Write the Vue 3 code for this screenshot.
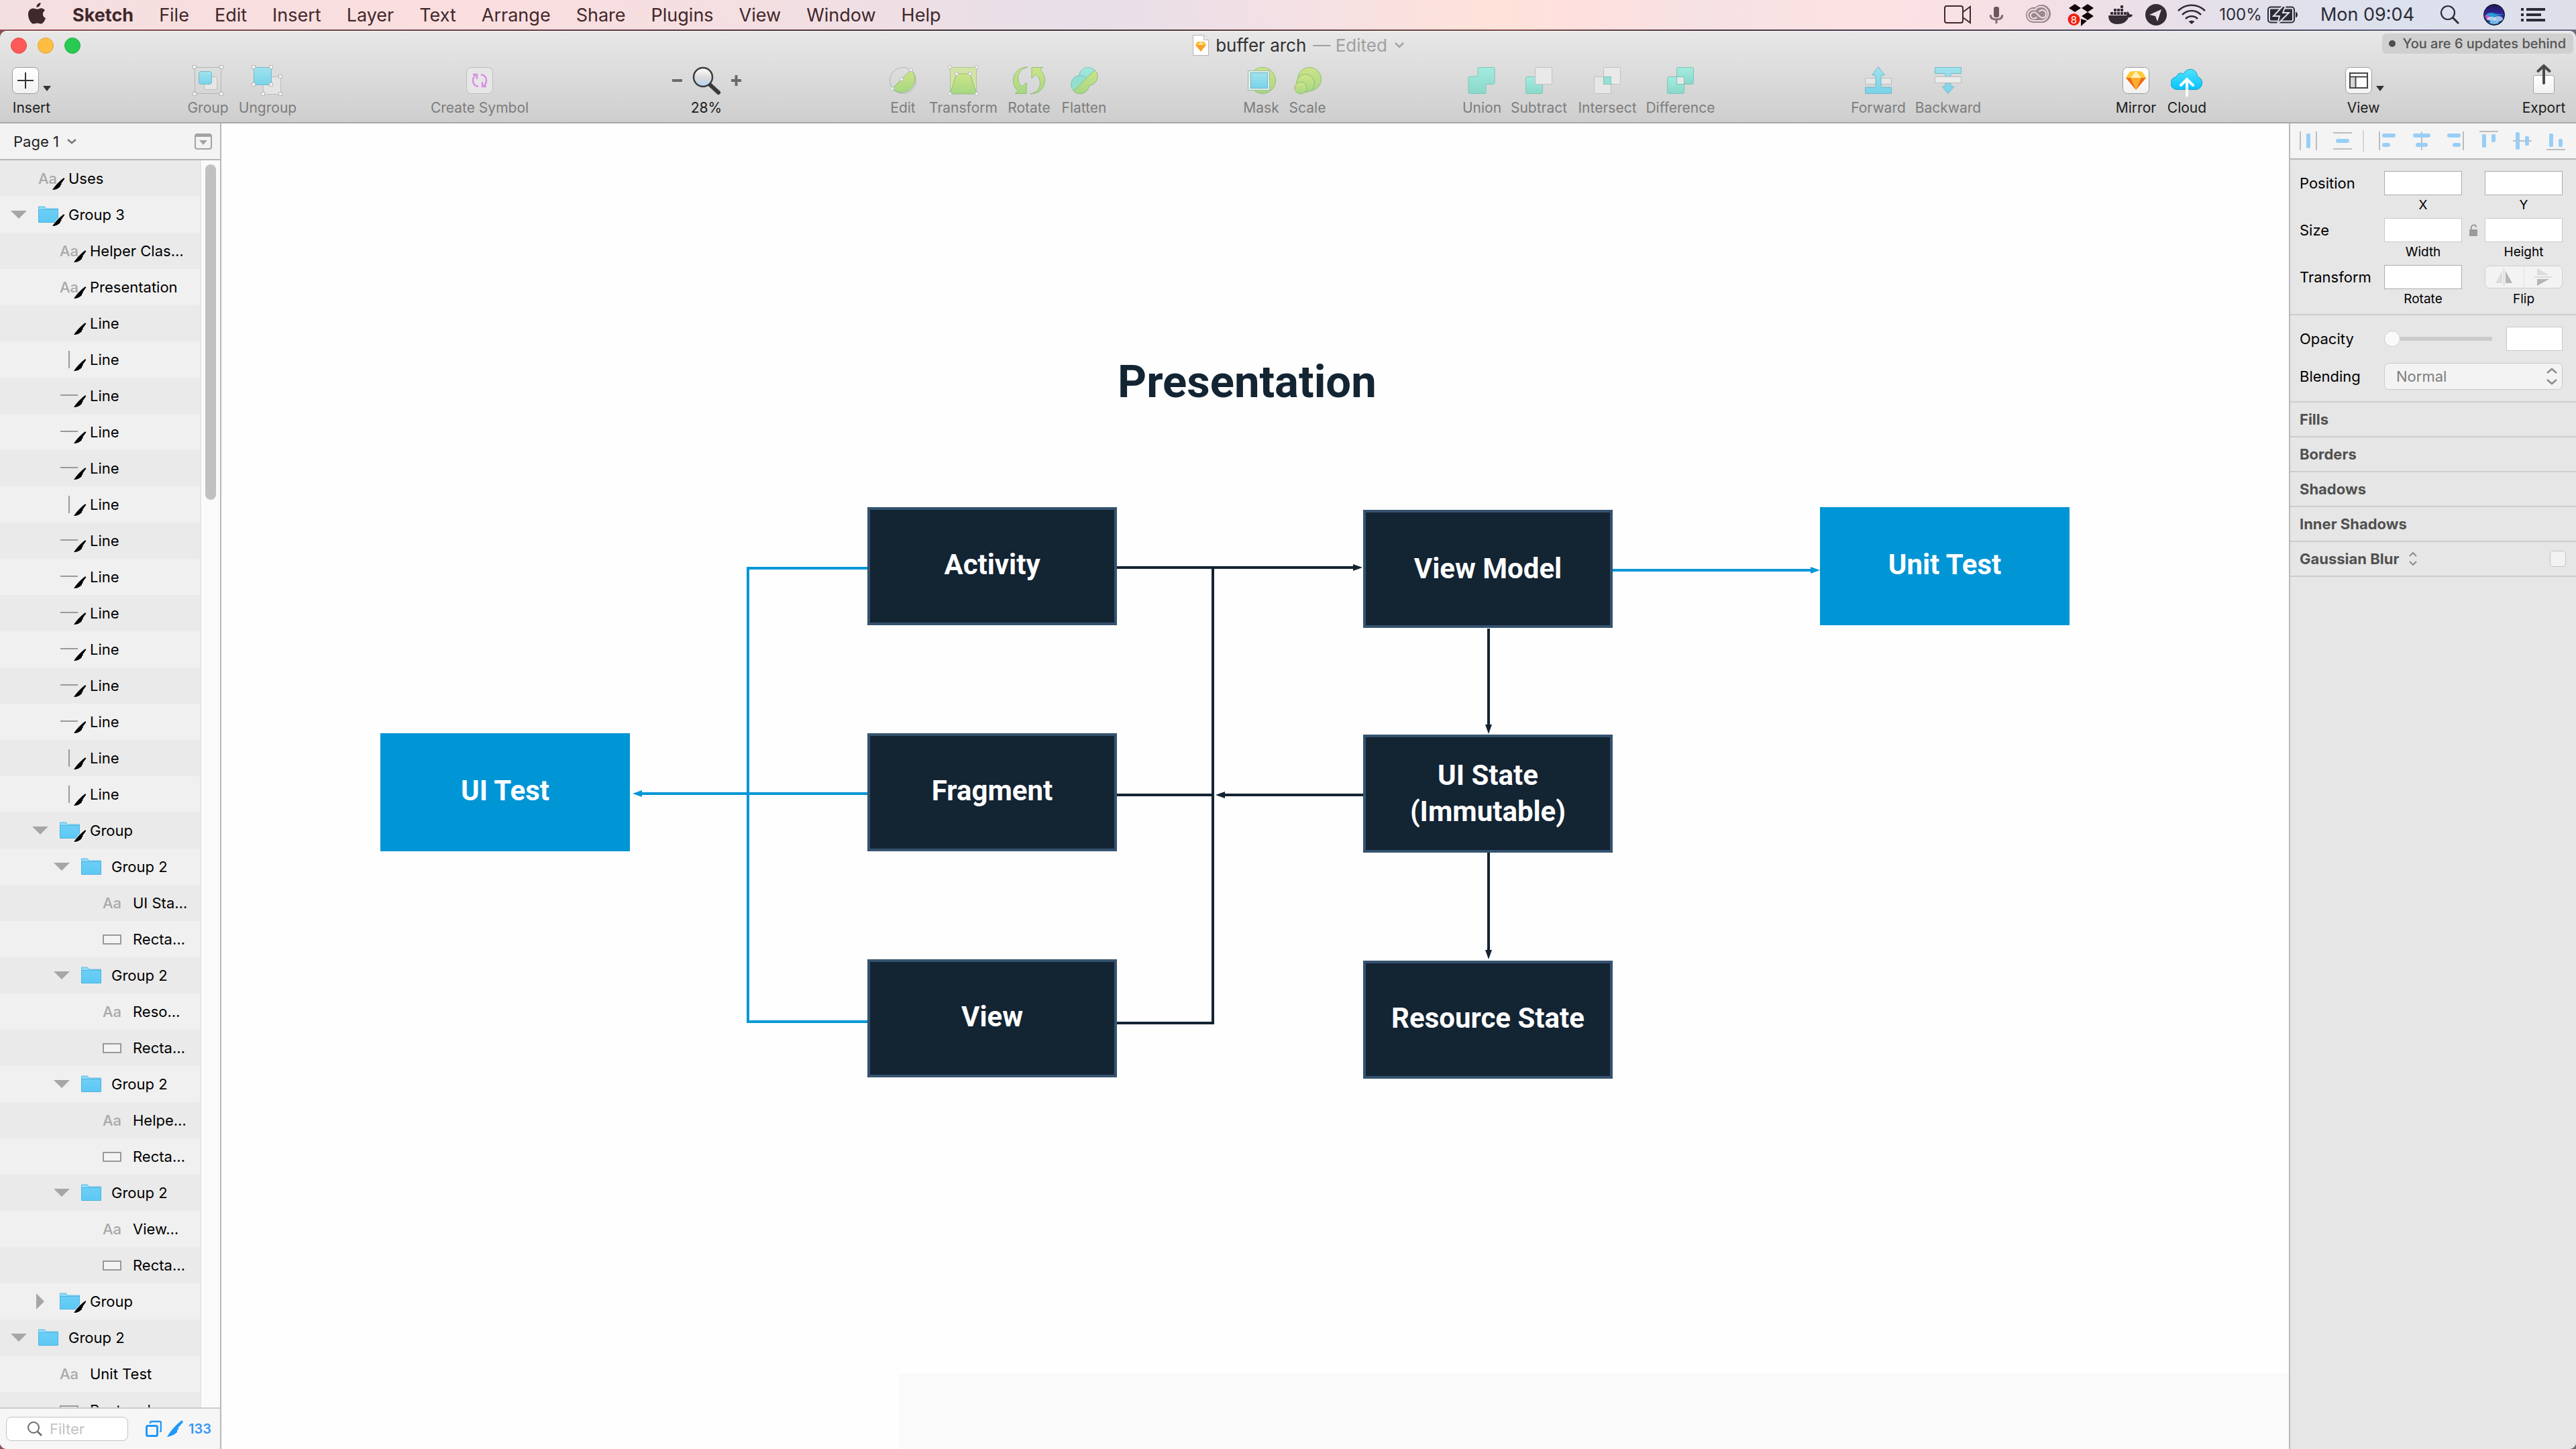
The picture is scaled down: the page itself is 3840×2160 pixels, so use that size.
<script setup>
const menus = ['File', 'Edit', 'Insert', 'Layer', 'Text', 'Arrange', 'Share', 'Plugins', 'View', 'Window', 'Help']

const box = '<rect x="4.5" y="4.5" width="39" height="39" rx="7" fill="url(#g-white)" stroke="#9c9c9c"/>'
const drop = '<path d="M50 32h12l-6 8z" fill="#333"/>'
const handle = (x, y) => `<rect x="${x - 2.5}" y="${y - 2.5}" width="5" height="5" fill="#f2f2f2" stroke="#b9b9b9"/>`
const knob = (x, y) => `<circle cx="${x}" cy="${y}" r="2.6" fill="#f0f0f0" stroke="#bbb"/>`
const arrowShape = 'M22 4C8 4 .5 14 .5 24c0 7 3 12 7 16l-4 3.500h16.500V27l-6 6C10 30 7.500 26 7.500 20 7.500 12 13 6 22 4z'

const glyphs = {
  insert: { w: 66, d: box + '<path d="M24 12v24M12 24h24" stroke="#333" stroke-width="2"/>' + drop },
  group: {
    w: 48,
    d: '<rect x="4.5" y="4.5" width="39" height="39" fill="none" stroke="#b4b4b4"/><rect x="18.5" y="18.5" width="19" height="19" rx="3" fill="#e6e6e6" stroke="#bdbdbd"/><rect x="10.5" y="10.5" width="19" height="19" rx="3" fill="url(#g-blue)" stroke="#78b8c8"/>' +
      handle(4, 4) + handle(44, 4) + handle(4, 44) + handle(44, 44)
  },
  ungroup: {
    w: 48,
    d: '<rect x="17.5" y="18.5" width="26" height="26" fill="#e4e4e4" stroke="#bdbdbd"/><rect x="3.500" y="4.5" width="26" height="26" fill="url(#g-blue)" stroke="#78b8c8"/>' +
      handle(3, 4) + handle(29, 4) + handle(3, 30) + handle(29, 30) + handle(43, 18) + handle(17, 44) + handle(43, 44)
  },
  symbol: {
    w: 48,
    d: '<rect x="4.5" y="4.5" width="39" height="39" rx="7" fill="#e6e6e6" stroke="#bdbdbd"/><g fill="none" stroke="#d890e6" stroke-width="2.5"><path d="M22 33c-6-1-8-5-8-9 0-4 2-7 5-9M14 15h6v7"/><path d="M26 15c6 1 8 5 8 9 0 4-2 7-5 9M34 33h-6v-7"/></g>'
  },
  zoom: {
    w: 106,
    d: '<path d="M2 24h15M90 24h15M97.500 16v16" stroke="#6a6a6a" stroke-width="4"/><path d="M58 30l13 12" stroke="#3a3a3a" stroke-width="6" stroke-linecap="round"/><circle cx="48" cy="19" r="14" fill="url(#g-lens)" stroke="#3c3c3c" stroke-width="2.500"/>'
  },
  edit: {
    w: 48,
    d: '<circle cx="24" cy="24" r="19.500" fill="none" stroke="#b4b4b4"/><path d="M36 8A19.500 19.500 0 1 1 8 36z" fill="url(#g-green)" stroke="#8dbd78"/>' + knob(8, 36) + knob(22, 22) + knob(36, 8)
  },
  transform: {
    w: 48,
    d: '<rect x="4.5" y="4.5" width="39" height="39" fill="#d3e3a8" stroke="#abc590"/><path d="M14 14h20l10 30H4z" fill="url(#g-green)" stroke="#8dbd78"/>' + knob(4, 4) + knob(44, 4) + knob(4, 44) + knob(44, 44) + knob(14, 14) + knob(34, 14)
  },
  rotate: {
    w: 48,
    d: `<path d="${arrowShape}" fill="url(#g-green)" stroke="#8dbd78"/><path d="${arrowShape}" transform="rotate(180 24 24)" fill="url(#g-green-up)" stroke="#8dbd78"/>`
  },
  flatten: {
    w: 48,
    d: '<circle cx="30" cy="18" r="13.500" fill="url(#g-teal)" stroke="#7fc4b4"/><circle cx="18" cy="30" r="13.500" fill="#93dfd0" stroke="#7fc4b4"/><path d="M40 8.500L8.500 39.500a13.500 13.500 0 0 0 23-8A13.500 13.500 0 0 0 40 8.500z" fill="url(#g-green)" stroke="#8dbd78"/>'
  },
  mask: {
    w: 48,
    d: '<circle cx="26" cy="24" r="19.500" fill="url(#g-green)" stroke="#8dbd78"/><rect x="4.500" y="9.500" width="32" height="29" fill="#dfeee0" stroke="#9fb8b0"/><rect x="8.500" y="12.500" width="25" height="23" fill="url(#g-blue)" stroke="#6fb3cc"/>'
  },
  scale: {
    w: 48,
    d: '<g fill="url(#g-green)" stroke="#8dbd78"><circle cx="27" cy="22" r="17.500"/><circle cx="21" cy="28" r="13.500"/><circle cx="14" cy="35" r="9"/></g>'
  },
  union: { w: 48, d: '<path d="M20 4.500h21a2 2 0 0 1 2 2v21a2 2 0 0 1-2 2H30v12a2 2 0 0 1-2 2H6a2 2 0 0 1-2-2V20a2 2 0 0 1 2-2h12V6.500a2 2 0 0 1 2-2z" fill="url(#g-teal)" stroke="#7fc4b4"/>' },
  subtract: { w: 48, d: '<rect x="4.5" y="18.5" width="25" height="25" rx="2" fill="url(#g-teal)" stroke="#7fc4b4"/><rect x="18.500" y="4.500" width="25" height="25" rx="2" fill="#e9e9e9" stroke="#c0c0c0"/>' },
  intersect: { w: 48, d: '<rect x="4.5" y="18.5" width="25" height="25" rx="2" fill="#e6e6e6" stroke="#c0c0c0"/><rect x="18.500" y="4.500" width="25" height="25" rx="2" fill="#e9e9e9" stroke="#c0c0c0"/><rect x="18.500" y="18.500" width="11" height="11" fill="#97dfd2" stroke="#7fc4b4"/>' },
  difference: { w: 48, d: '<rect x="4.5" y="18.5" width="25" height="25" rx="2" fill="url(#g-teal)" stroke="#7fc4b4"/><rect x="18.500" y="4.500" width="25" height="25" rx="2" fill="url(#g-teal)" stroke="#7fc4b4"/><rect x="18.500" y="18.500" width="11" height="11" fill="#e6e6e6" stroke="#7fc4b4"/>' },
  forward: { w: 48, d: '<rect x="4.500" y="20.500" width="39" height="9" fill="#e6e6e6" stroke="#bdbdbd"/><path d="M24 3.500l9.500 12.500H28v18h15.500v9.500h-39V34H20V16h-5.500z" fill="url(#g-blue)" stroke="#78b8c8"/>' },
  backward: { w: 48, d: '<path d="M4.500 4.500h39v9H28v14h-8v-14H4.500zM20 28h8v5h5l-9 10.500L15 33h5z" fill="url(#g-blue)" stroke="#78b8c8"/><rect x="4.500" y="18.500" width="39" height="9" fill="#ebebeb" stroke="#bdbdbd"/>' },
  mirror: { w: 48, d: box + '<path d="M9 20l6-9 9-1 9 1 6 9-15 18z" fill="#fdad2e"/><path d="M9 20h7l8 18z" fill="#eb6c1b"/><path d="M39 20h-7l-8 18z" fill="#eb6c1b"/><path d="M15 11l9-1-8 10H9zM33 11l-9-1 8 10h7z" fill="#fdc938"/><path d="M24 10l8 10H16z" fill="#feeeb7"/>' },
  cloud: { w: 48, d: '<path d="M10 37.500a9.500 9.500 0 0 1-1.500-19A6.500 6.500 0 0 1 19 14.500a10.500 10.500 0 0 1 20.500 3.500A10 10 0 0 1 38 37.500z" fill="url(#g-cloud)" stroke="#1f9dc4"/><path d="M24 22v25M15 31l9-9 9 9" fill="none" stroke="#fff" stroke-width="4" stroke-linecap="round"/>' },
  view: { w: 62, d: box + '<rect x="11" y="13" width="26" height="22" fill="#fff" stroke="#444" stroke-width="2"/><path d="M12 20h8v14h-8z" fill="#d8d8d8"/><path d="M11 18.500h26M19.500 18.500V35" stroke="#444" stroke-width="2"/>' + drop },
  export: { w: 48, d: '<rect x="8.500" y="16.500" width="31" height="27" rx="3" fill="url(#g-white)" stroke="#a2a2a2"/><path d="M24 2v26M15.500 10L24 2l8.500 8" fill="none" stroke="#4a4a4a" stroke-width="4" stroke-linecap="round"/>' }
}

const tools = [
  { gap: 0, items: [['insert', 'Insert', 58, true]] },
  { gap: 190, items: [['group', 'Group', 88], ['ungroup', 'Ungroup', 90]] },
  { gap: 200, items: [['symbol', 'Create Symbol', 142]] },
  { gap: 215, items: [['zoom', '28%', 104, true]] },
  { gap: 212, items: [['edit', 'Edit', 58], ['transform', 'Transform', 122], ['rotate', 'Rotate', 74], ['flatten', 'Flatten', 90]] },
  { gap: 185, items: [['mask', 'Mask', 68], ['scale', 'Scale', 70]] },
  { gap: 187, items: [['union', 'Union', 76], ['subtract', 'Subtract', 94], ['intersect', 'Intersect', 110], ['difference', 'Difference', 108]] },
  { gap: 191, items: [['forward', 'Forward', 100], ['backward', 'Backward', 108]] },
  { gap: 187, items: [['mirror', 'Mirror', 78, true], ['cloud', 'Cloud', 74, true]] },
  { gap: 186, items: [['view', 'View', 80, true]] },
  { gap: 191, items: [['export', 'Export', 76, true]] }
]

const status = [
  { slot: 68, w: 40, d: '<path d="M4 9h21a3 3 0 0 1 3 3v19a3 3 0 0 1-3 3H4a3 3 0 0 1-3-3V12a3 3 0 0 1 3-3zM28 18l11-8v24l-11-8" fill="none" stroke="#41282d" stroke-width="2"/>' },
  { slot: 48, w: 20, d: '<rect x="6" y="10" width="8" height="16" rx="3" fill="#6e565b"/><path d="M1 22c0 5 4 7 9 7s9-2 9-7M10 29v6" fill="none" stroke="#836c71" stroke-width="3"/>' },
  { slot: 76, w: 40, d: '<g fill="none" stroke-linecap="round"><path d="M12 34A11.500 11.500 0 0 1 9 12 9 9 0 0 1 16 11a13.500 13.500 0 1 1 10 23z" fill="#9b878d"/><path d="M13 31a8.500 8.500 0 1 1 3-16.500 10.500 10.500 0 1 1 10 16.500z" stroke="#f0e0e4" stroke-width="2"/><path d="M18 26c-5 4-10 0-9-4 1-4 6-5 9-2l5 5c4 3 9 1 9-4s-6-8-10-4" stroke="#f0e0e4" stroke-width="2"/></g>' },
  { slot: 52, w: 40, d: '<g fill="#12080c"><path d="M11 6l9 6-9 6-9-6zM30 6l9 6-9 6-9-6zM30 18l9 6-9 6-9-6zM20 28l9 3-9 8z"/></g><circle cx="9.500" cy="29" r="9" fill="#f0200f"/><text x="9.500" y="34.500" text-anchor="middle" font-size="15" fill="#fff" font-family="Inter, sans-serif">8</text>' },
  { slot: 66, w: 38, d: '<g fill="#352c35"><path d="M1 23h27c1-2 0-4 1-6 2 1 3 2 3 4l5 1c-1 3-3 4-6 4C28 33 22 36 14 36 5 36 1 31 1 23zM4 18h4v4H4zM9 18h4v4H9zM14 18h4v4h-4zM19 18h4v4h-4zM24 18h4v4h-4zM9 13h4v4H9zM14 13h4v4h-4zM19 13h4v4h-4zM19 8h4v4h-4z"/></g>' },
  { slot: 40, w: 32, d: '<circle cx="16" cy="22" r="16" fill="#352c35"/><path d="M24 14l-6 18-3-8-9-2z" fill="#ece0e8"/>' },
  { slot: 66, w: 42, d: '<g fill="none" stroke="#2f2b36" stroke-width="2.500"><path d="M1 16c11-11 29-11 40 0M7 22c8-8 20-8 28 0M12 28c5-5 13-5 18 0"/></g><path d="M16.500 32c3-2 6-2 9 0L21 36z" fill="#2f2b36"/>' },
  { slot: 80, text: '100%', small: true },
  { slot: 46, w: 46, d: '<rect x="1" y="10.500" width="39" height="23" rx="4" fill="none" stroke="#2b2c38" stroke-width="2"/><path d="M42 17.500c4 1 4 8 0 9z" fill="#2b2c38"/><rect x="4" y="13.500" width="33" height="17" rx="1" fill="#2b2c38"/><path d="M23 9L9 24h9l-3 12 17-17h-9l4-10z" fill="#2b2c38" stroke="#e2e0ea" stroke-width="2"/>' },
  { slot: 206, text: 'Mon 09:04' },
  { slot: 40, w: 28, d: '<circle cx="11" cy="19" r="10" fill="none" stroke="#2b2c38" stroke-width="2.200"/><path d="M18 26l9 9" stroke="#2b2c38" stroke-width="3"/>' },
  { slot: 92, w: 32, d: '<circle cx="16" cy="22" r="15.500" fill="url(#g-siri)" stroke="#0b1020"/><path d="M2 24c4-5 9-6 14-4 5 1 9 2 14 1-6 3-9 1-13 4-5 3-9 2-15-1z" fill="#25c5ee" opacity=".75"/><path d="M2 24c5-4 7 0 9 3l-6 3z" fill="#e64bb8" opacity=".8"/><ellipse cx="12" cy="28" rx="7" ry="3" fill="#dff3ff" opacity=".75"/><ellipse cx="22" cy="28" rx="7" ry="4" fill="#c9ecff" opacity=".75"/><ellipse cx="16" cy="33" rx="7" ry="3" fill="#8fd4f5" opacity=".8"/>' },
  { slot: 24, w: 36, d: '<path d="M0 14h4M8 14h28M0 22h4M8 22h22M0 30h4M8 30h28" stroke="#2b2c38" stroke-width="4"/>' }
]

const line = (icon) => ({ level: 1, icon, pen: true, label: 'Line' })
const pair = (label) => [
  { level: 2, icon: 'folder', open: true, label: 'Group 2' },
  { level: 3, icon: 'text', label },
  { level: 3, icon: 'rect', label: 'Recta…' }
]
const layers = [
  { level: 0, icon: 'text', pen: true, label: 'Uses' },
  { level: 0, icon: 'folder', pen: true, open: true, label: 'Group 3' },
  { level: 1, icon: 'text', pen: true, label: 'Helper Clas…' },
  { level: 1, icon: 'text', pen: true, label: 'Presentation' },
  ...['none', 'v', 'h', 'h', 'h', 'v', 'h', 'h', 'h', 'h', 'h', 'h', 'v', 'v'].map(line),
  { level: 1, icon: 'folder', pen: true, open: true, label: 'Group' },
  ...['UI Sta…', 'Reso…', 'Helpe…', 'View…'].flatMap(pair),
  { level: 1, icon: 'folder', pen: true, closed: true, label: 'Group' },
  { level: 0, icon: 'folder', open: true, label: 'Group 2' },
  { level: 1, icon: 'text', label: 'Unit Test' },
  { level: 1, icon: 'rect', label: 'Rectangle' }
]

const nodes = [
  { x: 963, y: 572, text: 'Activity', lift: true },
  { x: 963, y: 909, text: 'Fragment', lift: true },
  { x: 963, y: 1246, text: 'View', lift: true },
  { x: 1702, y: 576, text: 'View Model' },
  { x: 1702, y: 911, text: 'UI State\n(Immutable)' },
  { x: 1702, y: 1248, text: 'Resource State', lift: true },
  { x: 2383, y: 572, text: 'Unit Test', blue: true, lift: true },
  { x: 237, y: 909, text: 'UI Test', blue: true, lift: true }
]

const aligners = [
  '<path d="M1 2v28M25 2v28" stroke="#bdbdbd" stroke-width="2"/><rect x="10" y="5" width="6" height="22" rx="2"/>',
  '<path d="M0 4h28M0 28h28" stroke="#bdbdbd" stroke-width="2"/><rect x="4" y="13" width="20" height="6" rx="3"/>',
  '<path d="M1 2v28" stroke="#bdbdbd" stroke-width="2"/><rect x="5" y="5" width="20" height="6" rx="3"/><rect x="5" y="19" width="12" height="6" rx="3"/>',
  '<path d="M14 2v28" stroke="#bdbdbd" stroke-width="2"/><rect x="1" y="5" width="26" height="6" rx="3"/><rect x="5" y="19" width="18" height="6" rx="3"/>',
  '<path d="M26 2v28" stroke="#bdbdbd" stroke-width="2"/><rect x="2" y="5" width="20" height="6" rx="3"/><rect x="10" y="19" width="12" height="6" rx="3"/>',
  '<path d="M0 2h28" stroke="#bdbdbd" stroke-width="2"/><rect x="4" y="6" width="6" height="20" rx="2"/><rect x="18" y="6" width="6" height="12" rx="2"/>',
  '<path d="M0 16h28" stroke="#bdbdbd" stroke-width="2"/><rect x="4" y="3" width="6" height="26" rx="2"/><rect x="18" y="9" width="6" height="14" rx="2"/>',
  '<path d="M0 29h28" stroke="#bdbdbd" stroke-width="2"/><rect x="4" y="5" width="6" height="20" rx="2"/><rect x="18" y="13" width="6" height="12" rx="2"/>'
]
</script>

<template>
  <div class="screen">
    <svg class="defs" width="0" height="0" aria-hidden="true">
      <defs>
        <linearGradient id="g-white" x2="0" y2="1"><stop stop-color="#fff" /><stop offset="1" stop-color="#f1f1f1" /></linearGradient>
        <linearGradient id="g-blue" x2="0" y2="1"><stop stop-color="#a0e3ed" /><stop offset="1" stop-color="#78d3ea" /></linearGradient>
        <linearGradient id="g-green" x2="0" y2="1"><stop stop-color="#cfe489" /><stop offset="1" stop-color="#a6d782" /></linearGradient>
        <linearGradient id="g-green-up" x2="0" y2="1"><stop stop-color="#a6d782" /><stop offset="1" stop-color="#cfe489" /></linearGradient>
        <linearGradient id="g-teal" x2="0" y2="1"><stop stop-color="#a5ebe0" /><stop offset="1" stop-color="#88d8ca" /></linearGradient>
        <linearGradient id="g-cloud" x2="0" y2="1"><stop stop-color="#4fe3ff" /><stop offset="1" stop-color="#06c3ff" /></linearGradient>
        <linearGradient id="g-lens" x2="0" y2="1"><stop stop-color="#fff" /><stop offset=".5" stop-color="#dcdcdc" /><stop offset="1" stop-color="#b2d3f5" /></linearGradient>
        <linearGradient id="g-folder" x2="0" y2="1"><stop stop-color="#6ccff6" /><stop offset="1" stop-color="#5cc8f4" /></linearGradient>
        <linearGradient id="g-siri" x2="0" y2="1"><stop stop-color="#1d1752" /><stop offset=".45" stop-color="#33259a" /><stop offset="1" stop-color="#0b4a86" /></linearGradient>
      </defs>
    </svg>

    <header class="menubar">
      <nav class="menus">
        <svg class="apple" width="28" height="34" viewBox="0 0 28 34" aria-label="Apple">
          <path d="M18.500 1c.3 3.500-2.500 7-6 7C12 4.500 15 1.300 18.500 1zM25 12.500c-4.500 2.700-4 9.500 1 11.500-1 3.500-4 8.500-7 8.500-2 0-3-1-5.500-1s-3.500 1-5.500 1C4 32.500 0 25 0 18.500S4 9.500 7.500 9.500c2.500 0 4 1.200 6 1.200s3.500-1.400 6-1.400c2 0 4 1 5.500 3.200z" fill="#41282b" />
        </svg>
        <a href="#" class="app">Sketch</a>
        <a v-for="m in menus" :key="m" href="#">{{ m }}</a>
      </nav>
      <div class="status">
        <span v-for="(s, i) in status" :key="i" class="slot" :class="{ small: s.small }" :style="{ width: s.slot + 'px' }">
          <template v-if="s.text">{{ s.text }}</template>
          <svg v-else :width="s.w" height="44" :viewBox="`0 0 ${s.w} 44`" v-html="s.d" />
        </span>
      </div>
    </header>

    <main class="window">
      <header class="chrome">
        <div class="titlebar">
          <div class="lights"><button class="red" aria-label="Close"></button><button class="amber" aria-label="Minimise"></button><button class="green" aria-label="Zoom"></button></div>
          <div class="title">
            <svg width="24" height="32" viewBox="0 0 24 32">
              <path d="M.5.500h16l7 7v23H.5z" fill="#fff" stroke="#b5b5b5" /><path d="M16.500.500v7h7" fill="#eee" stroke="#b5b5b5" />
              <path d="M4 15l3-5h10l3 5-8 10z" fill="#fb9f25" /><path d="M4 15h16l-3-5H7z" fill="#fdc43a" /><path d="M12 10l4 5H8z" fill="#fde9a8" />
            </svg>
            <span>buffer arch</span><span class="edited">— Edited</span>
            <svg width="16" height="10" viewBox="0 0 16 10"><path d="M2 1l6 6 6-6" fill="none" stroke="#a5a5a5" stroke-width="2.500" /></svg>
          </div>
          <button class="updates"><i></i>You are 6 updates behind</button>
        </div>
        <div class="toolbar">
          <template v-for="(g, i) in tools" :key="i">
            <div v-if="g.gap" class="spacer" :style="{ flexGrow: g.gap }"></div>
            <button v-for="[icon, label, w, on] in g.items" :key="icon" class="tool" :class="{ on }" :style="{ width: w + 'px' }">
              <svg :width="glyphs[icon].w" height="48" :viewBox="`0 0 ${glyphs[icon].w} 48`" v-html="glyphs[icon].d" />
              <span>{{ label }}</span>
            </button>
          </template>
        </div>
      </header>

      <div class="body">
        <aside class="sidebar">
          <div class="pagebar">
            <button class="page">Page 1
              <svg width="16" height="10" viewBox="0 0 16 10"><path d="M2 2l6 5 6-5" fill="none" stroke="#777" stroke-width="2.500" /></svg>
            </button>
            <button class="panel-toggle" aria-label="Toggle pages">
              <svg width="26" height="24" viewBox="0 0 26 24"><rect x="1" y="1" width="24" height="22" rx="3" fill="none" stroke="#a3a3a3" stroke-width="2" /><path d="M2 2h22v3H2z" fill="#a3a3a3" /><path d="M7 10h12l-6 7z" fill="#a3a3a3" /></svg>
            </button>
          </div>
          <div class="layers">
            <ul>
              <li v-for="(l, i) in layers" :key="i" :class="'level-' + l.level">
                <span class="twist">
                  <svg v-if="l.open" width="24" height="12" viewBox="0 0 24 12"><path d="M0 0h24L12 12z" fill="#a6a6a6" /></svg>
                  <svg v-else-if="l.closed" width="12" height="24" viewBox="0 0 12 24"><path d="M0 0v24l12-12z" fill="#a6a6a6" /></svg>
                </span>
                <span class="kind">
                  <b v-if="l.icon === 'text'">Aa</b>
                  <svg v-else width="30" height="26" viewBox="0 0 30 26">
                    <template v-if="l.icon === 'folder'"><path d="M.5 1h9l2 3h18v4H.5z" fill="#8fdcfa" stroke="#5fbbe2" /><path d="M.5 5.500h29v19H.5z" fill="url(#g-folder)" stroke="#4fb3df" /></template>
                    <path v-if="l.icon === 'h'" d="M1 12h26" stroke="#999" stroke-width="2" />
                    <path v-if="l.icon === 'v'" d="M14 0v26" stroke="#999" stroke-width="2" />
                    <rect v-if="l.icon === 'rect'" x="1" y="7" width="26" height="13" fill="#f4f4f4" stroke="#999" stroke-width="2" />
                  </svg>
                  <svg v-if="l.pen" class="pen" width="18" height="18" viewBox="0 0 18 18"><path d="M0 18C3 14 6 9 16 1c1-1 3 0 2 1l-5 7 1 1-2 1v2C9 16 5 18 0 18z" :stroke="l.icon === 'folder' ? '#fff' : 'none'" stroke-width="2" paint-order="stroke" /></svg>
                </span>
                <span>{{ l.label }}</span>
              </li>
            </ul>
            <div class="track"><div class="thumb"></div></div>
          </div>
          <div class="filterbar">
            <label class="filter">
              <svg width="22" height="24" viewBox="0 0 22 24"><circle cx="9" cy="10" r="8" fill="none" stroke="#6a6a6a" stroke-width="2" /><path d="M15 16l6 6" stroke="#6a6a6a" stroke-width="2.500" /></svg>
              <input type="text" placeholder="Filter" aria-label="Filter" />
            </label>
            <svg width="24" height="26" viewBox="0 0 24 26" fill="none" stroke="#1f98f8" stroke-width="3"><rect x="1.500" y="8.500" width="16" height="15" rx="2" /><path d="M7 5V4a2 2 0 0 1 2-2h12a2 2 0 0 1 2 2v11a2 2 0 0 1-2 2" stroke-width="2.500" /></svg>
            <svg width="24" height="26" viewBox="0 0 24 26"><path d="M0 25C4 18 10 10 21 1c2-1 4 1 2 3l-7 8 2 1-3 2v3C11 22 5 24 0 25z" fill="#1f98f8" /></svg>
            <strong>133</strong>
          </div>
        </aside>

        <section class="canvas">
          <div class="artboard"></div>
          <svg class="wires" width="3082" height="1976" viewBox="0 0 3082 1976" fill="none" stroke-width="4">
            <g stroke="#0097d7">
              <path d="M963 663H785V1339H963M963 999H622M2074 666H2375" />
            </g>
            <g fill="#0097d7"><path d="M613 999l14-5v10zM2383 666l-14-5v10z" /></g>
            <g stroke="#132433">
              <path d="M1335 662H1692M1335 1001H1478M1335 1341H1478V662M1703 1001H1490M1889 753V902M1889 1087V1238" />
            </g>
            <g fill="#132433"><path d="M1701 662l-14-5v10zM1482 1001l14-5v10zM1889 910l-5-14h10zM1889 1246l-5-14h10z" /></g>
          </svg>
          <h1>Presentation</h1>
          <div v-for="n in nodes" :key="n.text" class="node" :class="{ blue: n.blue, lift: n.lift }" :style="{ left: n.x + 'px', top: n.y + 'px' }">{{ n.text }}</div>
        </section>

        <aside class="inspector">
          <div class="aligners">
            <button v-for="(a, i) in aligners" :key="i" aria-label="Align"><svg width="28" height="32" viewBox="0 0 28 32" fill="#98cef6" v-html="a" /></button>
          </div>
          <div class="block geometry">
            <span class="name">Position</span>
            <div class="field"><input id="px" type="text" /><label for="px">X</label></div>
            <span></span>
            <div class="field"><input id="py" type="text" /><label for="py">Y</label></div>
            <span class="name">Size</span>
            <div class="field pale"><input id="sw" type="text" /><label for="sw">Width</label></div>
            <span class="lock"><svg width="14" height="20" viewBox="0 0 14 20"><path d="M1 9h12v10H1z" fill="#9b9b9b" /><path d="M4 9V5a4 4 0 0 1 7-1v2" fill="none" stroke="#9b9b9b" stroke-width="2" /></svg></span>
            <div class="field pale"><input id="sh" type="text" /><label for="sh">Height</label></div>
            <span class="name">Transform</span>
            <div class="field"><input id="rot" type="text" /><label for="rot">Rotate</label></div>
            <span></span>
            <div class="field">
              <div class="flip">
                <button aria-label="Flip horizontally"><svg width="28" height="26" viewBox="0 0 28 26"><path d="M11 4v18H1z" fill="#dcdcdc" /><path d="M13.500 0v26" stroke="#dcdcdc" stroke-width="2" /><path d="M16 4v18h10z" fill="#b5b5b5" /></svg></button>
                <button aria-label="Flip vertically"><svg width="28" height="26" viewBox="0 0 28 26"><path d="M5 0v10h18z" fill="#dcdcdc" /><path d="M1 13h26" stroke="#dcdcdc" stroke-width="2" /><path d="M5 26V16h18z" fill="#b5b5b5" /></svg></button>
              </div>
              <span class="sub">Flip</span>
            </div>
          </div>
          <div class="block look">
            <div class="row"><label class="name" for="op">Opacity</label><input id="op" type="range" value="0" /><input class="amount" type="text" aria-label="Opacity value" /></div>
            <div class="row"><label class="name" for="bl">Blending</label>
              <div class="select"><select id="bl"><option>Normal</option></select>
                <svg width="16" height="26" viewBox="0 0 16 26"><path d="M1 8l7-6 7 6M1 18l7 6 7-6" fill="none" stroke="#8b8b8b" stroke-width="2.500" /></svg></div>
            </div>
          </div>
          <h2>Fills</h2>
          <h2>Borders</h2>
          <h2>Shadows</h2>
          <h2>Inner Shadows</h2>
          <h2><label for="blur">Gaussian Blur</label>
            <svg width="12" height="20" viewBox="0 0 12 20"><path d="M1 6l5-5 5 5M1 14l5 5 5-5" fill="none" stroke="#8b8b8b" stroke-width="2" /></svg>
            <input id="blur" type="checkbox" /></h2>
        </aside>
      </div>
    </main>
  </div>
</template>

<style>
body { margin: 0; background: #0b0b0d; }
</style>

<style scoped>
* { box-sizing: border-box; }
.screen { display: flex; flex-direction: column; height: 100vh; overflow: hidden; font: 22px/26px Inter, "Liberation Sans", sans-serif; color: #000; background: linear-gradient(90deg, #8b5055, #51343c 30%, #3f3238 40%, #7a4a44 59%, #4a3440 66%, #50506a 90%, #6c6c84); }
.defs { position: absolute; }
button { border: 0; padding: 0; margin: 0; background: none; font: inherit; color: inherit; }
a { color: inherit; text-decoration: none; }
svg { display: block; flex: none; }

.menubar { display: flex; justify-content: space-between; align-items: center; height: 44px; margin-bottom: 2px; flex: none; font-size: 27px; line-height: 44px; background: linear-gradient(90deg, #f4dfe0 0, #fbdedf 18%, #f3dfe2 30%, #e7dfe8 42%, #f3e0e5 50%, #ffe2da 58%, #ffe0de 61%, #f6e1e3 66%, #fde2e3 73%, #f4e0e6 79%, #e3e0ea 87%, #dce1ee 93%, #dfdfea); }
.menus { display: flex; align-items: center; gap: 38px; padding-left: 42px; color: #41282b; }
.menus a { padding-top: 1px; }
.apple { margin-bottom: 4px; }
.app { font-weight: 700; }
.status { display: flex; padding-right: 52px; color: #2b2c38; }
.slot { display: flex; justify-content: center; flex: none; white-space: nowrap; }
.small { font-size: 24px; }

.window { display: flex; flex-direction: column; flex: 1; min-height: 0; overflow: hidden; border-radius: 10px; background: #e6e6e6; }
.chrome { flex: none; height: 138px; background: linear-gradient(#f4f4f4 0, #e7e7e7 3px, #cecece); border-bottom: 2px solid #a9a9a9; }
.titlebar { display: grid; grid-template-columns: 1fr auto 1fr; align-items: center; height: 44px; }
.lights { display: flex; gap: 16px; padding-left: 16px; }
.lights button { width: 24px; height: 24px; border-radius: 50%; border: 1px solid #e2463f; background: #ff5a57; }
.lights .amber { background: #ffbe42; border-color: #e0a033; }
.lights .green { background: #28ca52; border-color: #1fae3c; }
.title { display: flex; align-items: center; gap: 10px; padding-left: 32px; font-size: 26px; line-height: 40px; color: #303030; }
.edited { color: #a0a0a0; }
.updates { justify-self: end; align-self: start; display: flex; align-items: center; gap: 11px; height: 30px; margin: 4px 4px 0 0; padding: 0 11px 0 10px; border-radius: 6px; background: #d0d0d0; font-size: 20px; font-weight: 500; color: #555; }
.updates i { width: 10px; height: 10px; border-radius: 50%; background: #4d4d4d; }
.toolbar { display: flex; padding: 6px 10px 0 18px; font-size: 21px; }
.spacer { flex: 1 1 0; }
.tool { display: flex; flex-direction: column; align-items: center; flex: none; color: #7d7d7d; }
.tool span { line-height: 34px; white-space: nowrap; }
.tool.on { color: #1d1d1d; }

.body { display: flex; flex: 1; min-height: 0; }
.sidebar { display: flex; flex-direction: column; width: 330px; flex: none; border-right: 2px solid #b8b8b8; background: #f2f2f2; }
.pagebar { display: flex; justify-content: space-between; align-items: center; height: 55px; flex: none; padding: 0 12px 0 20px; border-bottom: 2px solid #b5b5b5; background: #f3f3f3; }
.page { display: flex; align-items: center; gap: 11px; color: #222; }
.layers { display: flex; flex: 1; min-height: 0; overflow: hidden; }
ul { flex: 1; margin: 0; padding: 0; list-style: none; border-right: 2px solid #e4e4e4; }
li { display: flex; align-items: center; height: 54px; padding-left: 16px; white-space: nowrap; background: #eaeaea; }
li:nth-child(even) { background: #f0f0f0; }
.level-1 { padding-left: 48px; }
.level-2 { padding-left: 80px; }
.level-3 { padding-left: 112px; }
.twist { display: flex; justify-content: center; width: 24px; margin-right: 17px; flex: none; }
.kind { position: relative; display: block; width: 45px; flex: none; }
.kind b { display: block; font-weight: 500; font-size: 22px; color: #a9a9a9; }
.pen { position: absolute; left: 21px; bottom: -4px; overflow: visible; }
.track { width: 28px; flex: none; padding: 6px 6px 0; background: #fafafa; }
.thumb { height: 27%; border-radius: 8px; background: #c1c1c1; }
.filterbar { display: flex; align-items: center; gap: 8px; height: 62px; flex: none; padding: 0 9px; border-top: 2px solid #cdcdcd; background: #f6f6f6; color: #3797f5; }
.filterbar strong { font-size: 20px; font-weight: 600; }
.filter { display: flex; align-items: center; width: 182px; height: 36px; margin-right: 18px; padding-left: 31px; gap: 11px; border: 1px solid #c3c3c3; border-radius: 8px; background: #fff; }
.filter input { width: 90px; border: 0; padding: 0; background: none; font: inherit; outline: 0; }
.filter input::placeholder { color: #c3c3c3; }

.canvas { position: relative; flex: 1; min-width: 0; overflow: hidden; background: #fefefe; }
.artboard { position: absolute; left: 1009px; top: 1864px; right: 0; bottom: 0; background: #fafafa; }
.wires { position: absolute; left: 0; top: 0; }
h1 { position: absolute; left: 1336px; top: 345px; margin: 0; font: 700 67px/80px Roboto, sans-serif; color: #132433; }
.node { position: absolute; display: flex; align-items: center; justify-content: center; width: 372px; height: 176px; border: 4px solid #35536f; background: #132433; color: #fff; font: 700 42px/54px Roboto, sans-serif; text-align: center; white-space: pre; }
.lift { padding-bottom: 5px; }
.blue { background: #0095d5; border-color: #0095d5; }

.inspector { width: 428px; flex: none; border-left: 2px solid #b8b8b8; background: #e6e6e6; }
.aligners { display: flex; align-items: center; height: 54px; padding: 0 16px 0 14px; border-bottom: 2px solid #b5b5b5; background: #f4f4f4; justify-content: space-between; }
.aligners button:nth-child(2) { padding-right: 16px; border-right: 2px solid #d5d5d5; }
.block { border-bottom: 2px solid #cdcdcd; }
.geometry { display: grid; grid-template-columns: 126px 116px 34px 116px; row-gap: 4px; padding: 17px 0 7px 14px; }
.name { line-height: 36px; width: 126px; flex: none; }
.field { display: flex; flex-direction: column; }
.field label, .sub { line-height: 30px; font-size: 19px; text-align: center; }
.field input, .amount { width: 100%; height: 36px; border: 1px solid #ababab; background: #fff; padding: 0 6px; font: inherit; }
.pale input, .amount { border-color: #c9c9c9; }
.lock { display: flex; justify-content: center; align-items: center; height: 36px; }
.flip { display: flex; height: 34px; margin: 1px 0; border: 1px solid #cecece; border-radius: 7px; background: #f3f3f3; }
.flip button { flex: 1; display: flex; justify-content: center; align-items: center; }
.flip button + button { border-left: 1px solid #dedede; }
.look { display: flex; flex-direction: column; gap: 18px; padding: 17px 20px 17px 14px; }
.row { display: flex; align-items: center; }
.row input[type="range"] { appearance: none; width: 161px; height: 24px; margin: 0 21px 0 0; background: linear-gradient(#cbcbcb, #cbcbcb) center / 100% 6px no-repeat; }
.row input[type="range"]::-webkit-slider-thumb { appearance: none; width: 24px; height: 24px; border-radius: 50%; border: 1px solid #cfcfcf; background: #fafafa; }
.amount { width: 84px; }
.select { position: relative; width: 266px; height: 40px; }
.select select { appearance: none; width: 100%; height: 100%; padding: 0 17px; border: 1px solid #cbcbcb; border-radius: 7px; background: #f3f3f3; font: inherit; color: #7d7d7d; }
.select svg { position: absolute; right: 8px; top: 7px; pointer-events: none; }
h2 { display: flex; align-items: center; gap: 15px; height: 52px; margin: 0; padding: 0 15px 0 14px; border-bottom: 2px solid #cdcdcd; font-size: 22px; font-weight: 700; color: #505050; }
h2 input { appearance: none; width: 24px; height: 24px; margin: 0 0 0 auto; border: 1px solid #c3c3c3; border-radius: 5px; background: #f2f2f2; }
</style>
